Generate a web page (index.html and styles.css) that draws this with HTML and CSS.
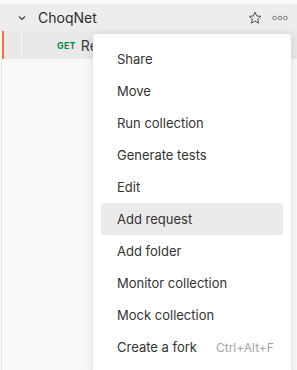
FILE: index.html
```html
<!DOCTYPE html>
<html lang="en">
<head>
    <meta charset="UTF-8">
    <meta name="viewport" content="width=device-width, initial-scale=1.0">
    <title>Collection menu</title>
    <link rel="stylesheet" href="styles.css">
</head>
<body>
    <div class="sidebar">
        <div class="top-gap"></div>
        <div class="collection-row">
            <svg class="chevron" width="10" height="10" viewBox="0 0 10 10">
                <path d="M2 3.5 L5 6.5 L8 3.5" fill="none" stroke="#3a3a3a" stroke-width="1.1"/>
            </svg>
            <span class="collection-name">ChoqNet</span>
            <div class="row-actions">
                <svg class="star" width="14" height="14" viewBox="0 0 14 14">
                    <path d="M7 1.2 L8.7 5 L12.8 5.3 L9.7 8 L10.6 12.2 L7 10 L3.4 12.2 L4.3 8 L1.2 5.3 L5.3 5 Z" fill="none" stroke="#555" stroke-width="1"/>
                </svg>
                <svg class="dots" width="16" height="6" viewBox="0 0 16 6">
                    <circle cx="2.5" cy="3" r="1.8" fill="none" stroke="#6b6b6b" stroke-width="0.9"/>
                    <circle cx="8" cy="3" r="1.8" fill="none" stroke="#6b6b6b" stroke-width="0.9"/>
                    <circle cx="13.5" cy="3" r="1.8" fill="none" stroke="#6b6b6b" stroke-width="0.9"/>
                </svg>
            </div>
        </div>
        <div class="request-row">
            <div class="indent-guide"></div>
            <span class="method">GET</span>
            <span class="request-name">Request</span>
        </div>
        <div class="sidebar-body"></div>
    </div>

    <div class="menu">
        <div class="menu-item">Share</div>
        <div class="menu-item">Move</div>
        <div class="menu-item">Run collection</div>
        <div class="menu-item">Generate tests</div>
        <div class="menu-item">Edit</div>
        <div class="menu-item active">Add request</div>
        <div class="menu-item">Add folder</div>
        <div class="menu-item">Monitor collection</div>
        <div class="menu-item">Mock collection</div>
        <div class="menu-item">Create a fork <span class="shortcut">Ctrl+Alt+F</span></div>
    </div>
</body>
</html>
```

FILE: styles.css
```css
* {
    box-sizing: border-box;
    margin: 0;
    padding: 0;
}

body {
    font-family: Inter, "Noto Sans", sans-serif;
    background-color: #f9f9f9;
    color: #212121;
    width: 297px;
    height: 370px;
    overflow: hidden;
    position: relative;
}

.sidebar {
    height: 370px;
    display: flex;
    flex-direction: column;
}

.top-gap {
    height: 4px;
    background-color: #f9f9f9;
}

.collection-row {
    height: 27px;
    background-color: #ededed;
    display: flex;
    align-items: center;
    padding-left: 17px;
}

.chevron {
    margin-right: 11px;
}

.collection-name {
    font-size: 14px;
    color: #2b2b2b;
}

.row-actions {
    margin-left: auto;
    display: flex;
    align-items: center;
    gap: 10px;
    padding-right: 9px;
}

.request-row {
    height: 28px;
    background-color: #e9e9e9;
    border-left: 2px solid #ff6c37;
    margin-left: 2px;
    display: flex;
    align-items: center;
}

.indent-guide {
    width: 1px;
    height: 100%;
    background-color: #fafafa;
    margin-left: 17px;
    margin-right: 35px;
}

.method {
    font-size: 9px;
    font-weight: 700;
    color: #0f8a4c;
    margin-right: 5px;
    letter-spacing: 0.2px;
}

.request-name {
    font-size: 14px;
    color: #3a3a3a;
}

.sidebar-body {
    flex: 1;
    border-left: 1px solid #e6e6e6;
    margin-left: 1px;
}

.menu {
    position: absolute;
    left: 93px;
    top: 34px;
    width: 198px;
    height: 340px;
    background-color: #ffffff;
    border-radius: 4px;
    box-shadow: 0 2px 10px rgba(0, 0, 0, 0.13);
    padding: 9px 8px;
}

.menu-item {
    height: 32px;
    display: flex;
    align-items: center;
    padding-left: 16px;
    font-size: 13px;
    color: #333333;
    border-radius: 4px;
}

.menu-item.active {
    background-color: #ebebeb;
}

.shortcut {
    font-size: 12px;
    color: #a6a6a6;
    margin-left: 19px;
}
```
